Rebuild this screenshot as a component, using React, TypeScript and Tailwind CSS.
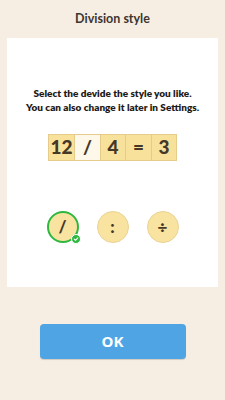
const tiles = [
  { t: '12', light: false },
  { t: '/', light: true },
  { t: '4', light: false },
  { t: '=', light: false },
  { t: '3', light: false },
];

const options = ['/', ':', '÷'];

export default function App() {
  return (
    <div
      className="w-[225px] h-[400px] bg-[#f6ede3] flex flex-col items-center"
      style={{ fontFamily: 'Lato, "Noto Sans", sans-serif' }}
    >
      <div className="h-[38px] flex items-center justify-center text-[12.5px] font-bold text-[#3d3530]">
        Division style
      </div>
      <div className="w-[211px] h-[249px] bg-white flex flex-col items-center">
        <div className="mt-[48px] text-[10px] leading-[14px] font-extrabold text-[#1f1b18] text-center whitespace-nowrap">
          <div>Select the devide the style you like.</div>
          <div>You can also change it later in Settings.</div>
        </div>
        <div className="mt-[20px] flex border border-[#e6cc8a]">
          {tiles.map((x, i) => (
            <div
              key={i}
              className={`w-[25.5px] h-[25px] flex items-center justify-center text-[19px] font-black text-[#463828] ${
                i > 0 ? 'border-l border-[#e6cc8a]' : ''
              } ${x.light ? 'bg-[#fdf8ea]' : 'bg-[#f8e29b]'}`}
            >
              {x.t}
            </div>
          ))}
        </div>
        <div className="mt-[50px] flex gap-[18px]">
          {options.map((o, i) => (
            <div
              key={o}
              className={`relative w-[32px] h-[32px] rounded-full bg-[#f9e3a1] flex items-center justify-center text-[17px] font-black text-[#463828] ${
                i === 0 ? 'border-2 border-[#2eb83f]' : 'border border-[#ebd394]'
              }`}
            >
              {o}
              {i === 0 && (
                <div className="absolute right-[-4px] bottom-[-3px] w-[10px] h-[10px] rounded-full bg-[#2eb83f] border border-white flex items-center justify-center">
                  <svg width="6" height="6" viewBox="0 0 10 10">
                    <path d="M2 5.2 L4.2 7.4 L8 3" stroke="white" strokeWidth="1.8" fill="none" strokeLinecap="round" strokeLinejoin="round" />
                  </svg>
                </div>
              )}
            </div>
          ))}
        </div>
      </div>
      <button
        className="mt-[37px] w-[146px] h-[35px] rounded-[4px] bg-[#4fa5e4] shadow-[0_1px_1px_rgba(0,0,0,0.15)] text-white text-[15px] font-bold"
        style={{ fontFamily: '"Open Sans", sans-serif' }}
      >
        OK
      </button>
    </div>
  );
}
